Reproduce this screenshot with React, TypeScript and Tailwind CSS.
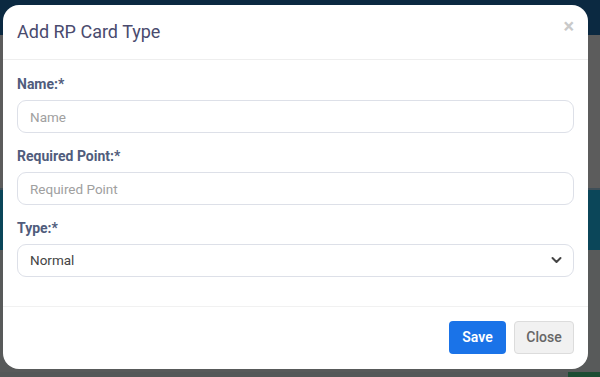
import React from "react";

const font = { fontFamily: "Roboto, 'Liberation Sans', sans-serif" };

export default function App() {
  return (
    <div className="relative h-[377px] w-[600px] overflow-hidden bg-[#5b5c5c]" style={font}>
      {/* dimmed page behind the modal */}
      <div className="h-[35px] bg-[#0b2941]" />
      <div className="h-[153px] bg-[#5c5c5c]" />
      <div className="h-[2px] bg-[#3f4f58]" />
      <div className="h-[60px] bg-[#0b4659]" />
      <div className="h-[122px] bg-[#585a5a]" />
      <div className="flex h-[5px] justify-end bg-[#545858]">
        <div className="w-[32px] bg-[#1d4d33]" />
      </div>

      {/* modal */}
      <div className="absolute left-[3px] top-[5px] flex h-[364px] w-[585px] flex-col rounded-[16px] bg-white">
        <div className="relative flex h-[55px] items-center border-b border-[#eeeeee] px-[14px]">
          <h2 className="text-[18px] leading-6 text-[#4a4b6e]">Add RP Card Type</h2>
          <span className="absolute right-[14px] top-[11px] text-[20px] font-bold leading-none text-[#c9c9c9]">×</span>
        </div>

        <form className="flex-1 px-[14px] pt-4">
          <Field label="Name:*">
            <input placeholder="Name" className="input" />
          </Field>
          <Field label="Required Point:*">
            <input placeholder="Required Point" className="input" />
          </Field>
          <Field label="Type:*">
            <div className="relative">
              <div className="input flex items-center pl-[15px] text-[14px] text-[#444]">Normal</div>
              <svg
                className="absolute right-[12px] top-[12px]"
                width="11"
                height="8"
                viewBox="0 0 11 8"
                fill="none"
                stroke="#444"
                strokeWidth="2"
                strokeLinecap="round"
                strokeLinejoin="round"
              >
                <path d="M1.5 2 5.5 6 9.5 2" />
              </svg>
            </div>
          </Field>
        </form>

        <div className="flex h-[63px] items-center justify-end gap-[8px] border-t border-[#f1f1f1] px-[14px] pb-px">
          <button className="h-[33px] w-[57px] rounded-[4px] bg-[#1a73e8] text-[14px] font-semibold text-white">Save</button>
          <button className="h-[33px] w-[60px] rounded-[4px] border border-[#dcdcdc] bg-[#f1f1f1] text-[14px] font-medium text-[#666]">
            Close
          </button>
        </div>
      </div>

      <style>{`.input{display:flex;width:100%;height:33px;border:1px solid #dde0e8;border-radius:9px;padding:0 12px;font-size:13.5px;color:#444;outline:none;background:#fff}.input::placeholder{color:#a0a0a0}`}</style>
    </div>
  );
}

function Field({ label, children }: { label: string; children: React.ReactNode }) {
  return (
    <label className="mb-[15px] block">
      <span className="mb-2 block text-[14px] font-bold leading-4 text-[#505c7c]">{label}</span>
      {children}
    </label>
  );
}
